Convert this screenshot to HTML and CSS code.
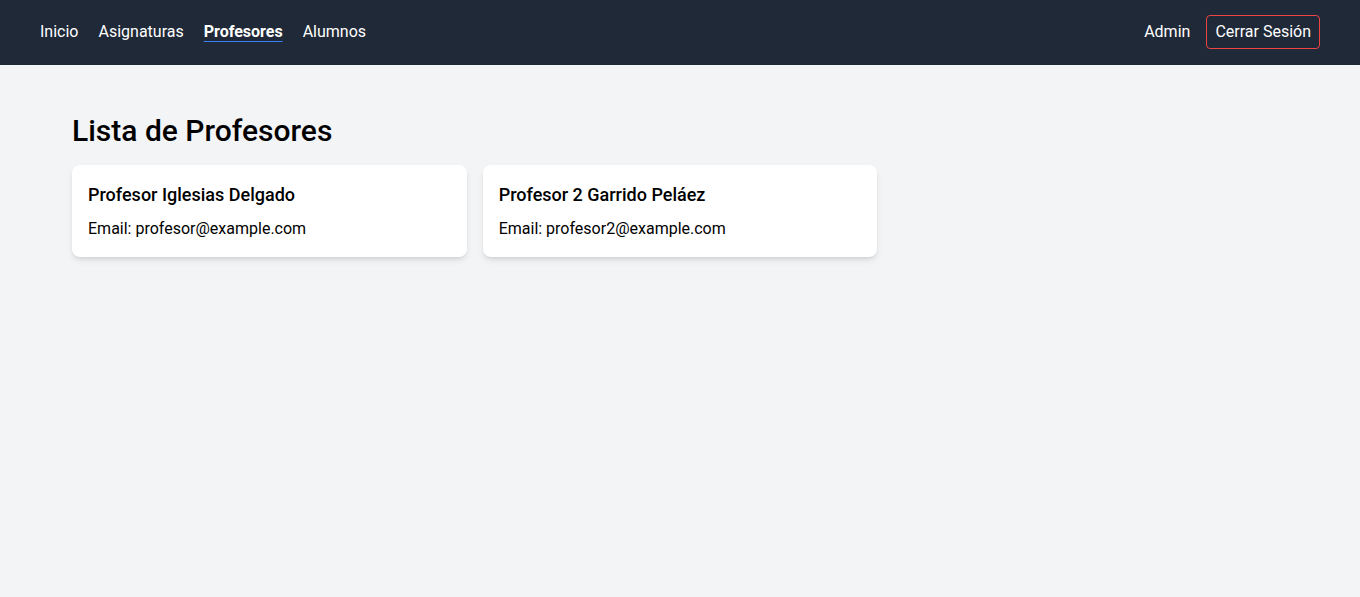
FILE: index.html
```html
<!DOCTYPE html>
<html lang="es">
<head>
<meta charset="utf-8">
<title>Profesores</title>
<link rel="stylesheet" href="styles.css">
</head>
<body>
<nav class="nav">
  <div class="nav-links">
    <a href="#" class="nav-link">Inicio</a>
    <a href="#" class="nav-link">Asignaturas</a>
    <a href="#" class="nav-link active">Profesores</a>
    <a href="#" class="nav-link">Alumnos</a>
  </div>
  <div class="nav-right">
    <span class="nav-user">Admin</span>
    <button class="logout">Cerrar Sesión</button>
  </div>
</nav>
<main class="main">
  <h1 class="title">Lista de Profesores</h1>
  <div class="grid">
    <div class="card">
      <h2 class="card-title">Profesor Iglesias Delgado</h2>
      <p class="card-text">Email: profesor@example.com</p>
    </div>
    <div class="card">
      <h2 class="card-title">Profesor 2 Garrido Peláez</h2>
      <p class="card-text">Email: profesor2@example.com</p>
    </div>
  </div>
</main>
</body>
</html>
```

FILE: styles.css
```css
* { box-sizing: border-box; }
html, body { margin: 0; padding: 0; }
body {
  font-family: "Roboto", "Noto Sans", sans-serif;
  background: #f3f4f6;
  color: #000;
  min-height: 100vh;
}
.nav {
  height: 65px;
  background: #1f2937;
  display: flex;
  align-items: center;
  justify-content: space-between;
  padding: 0 40px 2px;
}
.nav-links {
  display: flex;
  gap: 20px;
}
.nav-link {
  color: #fff;
  text-decoration: none;
  font-size: 16px;
  line-height: 24px;
}
.nav-link.active {
  font-weight: 700;
  text-decoration: underline;
  text-decoration-color: #3b82f6;
  text-decoration-thickness: 1px;
  text-underline-offset: 4px;
}
.nav-right {
  display: flex;
  align-items: center;
  gap: 16px;
}
.nav-user {
  color: #fff;
  font-size: 16px;
  line-height: 24px;
}
.logout {
  font-family: inherit;
  background: transparent;
  color: #fff;
  font-size: 16px;
  line-height: 24px;
  padding: 4px 8px;
  border: 1px solid #ef4444;
  border-radius: 4px;
  cursor: pointer;
}
.main {
  max-width: 1280px;
  margin: 0 auto;
  padding: 48px 32px;
}
.title {
  margin: 0 0 16px;
  font-size: 30px;
  line-height: 36px;
  font-weight: 500;
}
.grid {
  display: grid;
  grid-template-columns: repeat(3, 1fr);
  gap: 16px;
}
.card {
  background: #fff;
  border-radius: 8px;
  padding: 16px;
  box-shadow: 0 4px 6px -1px rgba(0,0,0,0.1), 0 2px 4px -2px rgba(0,0,0,0.1);
}
.card-title {
  margin: 0;
  font-size: 18px;
  line-height: 28px;
  font-weight: 500;
}
.card-text {
  margin: 8px 0 0;
  font-size: 16px;
  line-height: 24px;
}
```
